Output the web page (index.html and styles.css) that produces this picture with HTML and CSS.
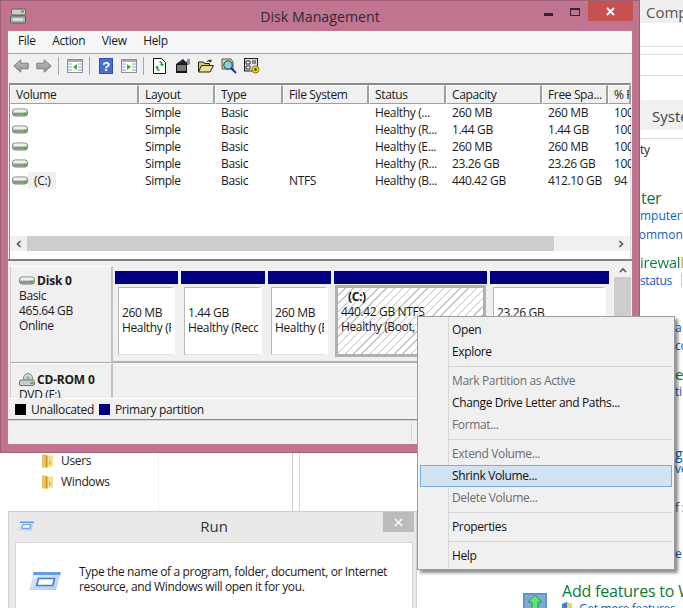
FILE: index.html
```html
<!DOCTYPE html>
<html lang="en">
<head>
<meta charset="utf-8">
<title>Disk Management</title>
<link rel="stylesheet" href="styles.css">
</head>
<body>
<svg class="defs" width="0" height="0" aria-hidden="true">
  <defs>
    <linearGradient id="arrowfill" x1="0" y1="0" x2="0" y2="1">
      <stop offset="0" stop-color="#c0c4c1"/>
      <stop offset="1" stop-color="#8c908d"/>
    </linearGradient>
    <linearGradient id="runbody" x1="0" y1="0" x2="1" y2="1">
      <stop offset="0" stop-color="#eaf3fd"/>
      <stop offset="1" stop-color="#a9c8ee"/>
    </linearGradient>
    <symbol id="disk" viewBox="0 0 16 9">
      <rect x="0.5" y="1" width="15" height="7" rx="2.5" fill="#c8ccc8" stroke="#77807a"/>
      <rect x="1.5" y="1.6" width="13" height="2.4" rx="1.2" fill="#eef0ee"/>
      <rect x="1" y="5" width="14" height="2.4" rx="1" fill="#8d948f"/>
      <rect x="11.5" y="4.6" width="3" height="2.6" fill="#4cb81e"/>
    </symbol>
    <symbol id="folder" viewBox="0 0 14 16">
      <path d="M1 1h4l1 1v13H1z" fill="#e8c65a"/>
      <path d="M6 2h6l1 1v11l-7 1z" fill="#f7e08c"/>
      <path d="M5 2h2v13H5z" fill="#c59c2e"/>
      <path d="M9 8h1v4H9z" fill="#6db3e0"/>
    </symbol>
    <symbol id="runicon" viewBox="0 0 32 20">
      <path d="M5 1h27l-5 18H0z" fill="url(#runbody)"/>
      <path d="M4.500 1H32l-.8 3H3.700z" fill="#5f9de6"/>
      <path d="M9.500 7.500h16l-1.800 7h-16z" fill="#fff" stroke="#3b7fd6" stroke-width="1.600"/>
    </symbol>
  </defs>
</svg>

<div class="backdrop">
  <div class="tab-comp">Comp</div>
  <div class="rule rule-a"></div>
  <div class="rule rule-b"></div>
  <div class="rule rule-c"></div>
  <div class="tab-sys">Syste</div>
  <div class="rule rule-d"></div>
  <span class="frag frag-ty">ty</span>
  <span class="frag head frag-ter">ter</span>
  <span class="frag link frag-mputer">mputer'</span>
  <span class="frag link frag-common">common</span>
  <span class="frag head frag-firewall">irewall</span>
  <span class="frag link frag-status">status</span>
  <div class="status-sep"></div>
  <span class="frag link frag-a">a</span>
  <span class="frag link frag-co">co</span>
  <span class="frag head frag-e">e</span>
  <span class="frag link frag-ti">ti</span>
  <span class="frag link frag-g">g</span>
  <span class="frag link frag-ve">ve</span>
  <span class="frag link frag-f">f :</span>
  <span class="frag link frag-e2">e</span>

  <div class="explorer-tree">
    <div class="tree-item"><svg class="tree-icon"><use href="#folder"/></svg>Users</div>
    <div class="tree-item"><svg class="tree-icon"><use href="#folder"/></svg>Windows</div>
  </div>
  <div class="pane-line"></div>
  <div class="pane-strip"></div>

  <div class="add-features">
    <svg class="add-icon" viewBox="0 0 24 16">
      <rect width="24" height="16" fill="#5c8cc4"/>
      <rect x="1.500" y="1.500" width="21" height="14" fill="#7fa8d6"/>
      <path d="M12 2l7 7h-4v7H9V9H5z" fill="#5ee07a" stroke="#2f9e4c"/>
    </svg>
    <div class="add-text">
      <div class="add-title">Add features to W</div>
      <div class="add-link">
        <svg class="shield" viewBox="0 0 12 13">
          <path d="M6 0l5 2v5c0 3-3 5-5 6-2-1-5-3-5-6V2z" fill="#f4cf55"/>
          <path d="M6 0L1 2v5h5zM6 7v6c2-1 5-3 5-6H6z" fill="#3f7fd0"/>
        </svg>
        Get more features
      </div>
    </div>
  </div>
</div>

<section class="run-window">
  <header class="run-title">
    <svg class="run-title-icon"><use href="#runicon"/></svg>
    <span>Run</span>
    <div class="run-close"><svg viewBox="0 0 10 10"><path d="M1 1l8 8M9 1l-8 8" stroke="#fff" stroke-width="1.600"/></svg></div>
  </header>
  <div class="run-body">
    <svg class="run-big-icon"><use href="#runicon"/></svg>
    <p>Type the name of a program, folder, document, or Internet resource, and Windows will open it for you.</p>
  </div>
</section>

<section class="dm-window">
  <header class="titlebar">
    <svg class="app-icon" viewBox="0 0 16 16">
      <rect x="1.500" y="1" width="14" height="6" rx="1.500" fill="#c8d0cc" stroke="#56605c"/>
      <rect x="11" y="2.500" width="3" height="2" fill="#49b51c"/>
      <rect x="0.500" y="8" width="15" height="7" rx="1" fill="#aab2ae" stroke="#56605c"/>
      <rect x="3" y="10.500" width="10" height="2" fill="#eef0ee"/>
    </svg>
    <h1>Disk Management</h1>
    <div class="controls">
      <svg class="ctl-min" viewBox="0 0 9 3"><rect width="9" height="3" fill="#2a2a30"/></svg>
      <svg class="ctl-max" viewBox="0 0 10 8"><rect x="0.500" y="0.500" width="9" height="7" fill="none" stroke="#2a2a30"/><rect width="10" height="2" fill="#2a2a30"/></svg>
      <div class="ctl-close"><svg viewBox="0 0 9 9"><path d="M1 1l7 7M8 1L1 8" stroke="#fff" stroke-width="1.800"/></svg></div>
    </div>
  </header>

  <div class="client">
    <nav class="menubar"><span>File</span><span>Action</span><span>View</span><span>Help</span></nav>

    <div class="toolbar">
      <svg class="tb tb-back" viewBox="0 0 16 14"><path d="M.8 7l7-6.200v3.400h7.400v5.600H7.800v3.400z" fill="url(#arrowfill)" stroke="#7c807d"/></svg>
      <svg class="tb" viewBox="0 0 16 14"><path d="M15.200 7l-7-6.200v3.400H.8v5.600h7.400v3.400z" fill="url(#arrowfill)" stroke="#7c807d"/></svg>
      <i class="tb-sep"></i>
      <svg class="tb" viewBox="0 0 16 14"><rect x="0.500" y="0.500" width="15" height="13" fill="#fff" stroke="#8a9099"/><rect x="1" y="1" width="14" height="2" fill="#a8aeb5"/><path d="M1 5h4M1 8h4M1 11h4M11 5h4M11 8h4M11 11h4" stroke="#8aa0c8"/><path d="M10 5v6L6 8z" fill="#38b030"/></svg>
      <i class="tb-sep tb-sep-wide"></i>
      <svg class="tb tb-help" viewBox="0 0 14 16"><rect width="14" height="16" fill="#2e4fb5"/><rect x="1" y="1" width="12" height="14" fill="#4a6fd0"/><text x="7" y="13" text-anchor="middle" class="tb-q">?</text></svg>
      <svg class="tb" viewBox="0 0 16 14"><rect x="0.500" y="0.500" width="15" height="13" fill="#fff" stroke="#8a9099"/><rect x="1" y="1" width="14" height="2" fill="#a8aeb5"/><path d="M1 5h4M1 8h4M1 11h4M11 5h4M11 8h4M11 11h4" stroke="#8aa0c8"/><path d="M6 5v6l4-3z" fill="#38b030"/></svg>
      <i class="tb-sep tb-sep-wide"></i>
      <svg class="tb tb-page" viewBox="0 0 13 16"><path d="M0.500 0.500h8l4 4v11h-12z" fill="#fff" stroke="#111"/><path d="M6.500 3c2 0 3 1 3 3H11L9 8.500 7 6h1c0-1-.7-1.500-1.500-1.500zM6.500 13c-2 0-3-1-3-3H2l2-2.500L6 10H5c0 1 .7 1.500 1.500 1.500z" fill="#1c9c28"/></svg>
      <svg class="tb tb-props" viewBox="0 0 16 16"><path d="M1 6h11v9H1z" fill="#111"/><path d="M2 8h9M2 10h9M2 12h9" stroke="#ddd"/><path d="M1 6l7-5 3 3 4-3v5l-4 1z" fill="#222"/><path d="M12 1h3v5h-3z" fill="#7f94c0"/></svg>
      <svg class="tb tb-open" viewBox="0 0 16 14"><path d="M0.500 3h5l1 1.500h5v8h-11z" fill="#d9c76c" stroke="#222"/><path d="M0.500 13l3-6.500h12l-3.500 6.500z" fill="#e8de8e" stroke="#222"/><path d="M9 3c1-2 3-2 4-1m0-1.500V2.500h-2" fill="none" stroke="#222"/></svg>
      <svg class="tb tb-find" viewBox="0 0 16 16"><path d="M1 1h9l2 3v7H1z" fill="#e8d88a" stroke="#555"/><circle cx="7" cy="7" r="4.200" fill="#7fd4e8" stroke="#334"/><path d="M10 10l5 5" stroke="#1a2ea8" stroke-width="2"/></svg>
      <svg class="tb tb-gear" viewBox="0 0 16 16"><rect x="0.500" y="0.500" width="13" height="12.500" fill="#ddd" stroke="#222"/><path d="M2 3h4v3H2zM8 3h4M8 5h4M2 8h4v3H2z" stroke="#333" fill="#fff"/><circle cx="11.500" cy="11.500" r="3.500" fill="#f2d21b" stroke="#8a7a10"/><circle cx="11.500" cy="11.500" r="1.200" fill="#222"/></svg>
    </div>

    <div class="listview">
      <div class="list-row list-head">
        <div>Volume</div><div>Layout</div><div>Type</div><div>File System</div><div>Status</div><div>Capacity</div><div>Free Spa...</div><div>% F</div>
      </div>
      <div class="list-rows">
        <div class="list-row"><div class="vol"><svg class="vol-icon"><use href="#disk"/></svg></div><div>Simple</div><div>Basic</div><div></div><div>Healthy (...</div><div>260 MB</div><div>260 MB</div><div>100</div></div>
        <div class="list-row"><div class="vol"><svg class="vol-icon"><use href="#disk"/></svg></div><div>Simple</div><div>Basic</div><div></div><div>Healthy (R...</div><div>1.44 GB</div><div>1.44 GB</div><div>100</div></div>
        <div class="list-row"><div class="vol"><svg class="vol-icon"><use href="#disk"/></svg></div><div>Simple</div><div>Basic</div><div></div><div>Healthy (E...</div><div>260 MB</div><div>260 MB</div><div>100</div></div>
        <div class="list-row"><div class="vol"><svg class="vol-icon"><use href="#disk"/></svg></div><div>Simple</div><div>Basic</div><div></div><div>Healthy (R...</div><div>23.26 GB</div><div>23.26 GB</div><div>100</div></div>
        <div class="list-row"><div class="vol"><svg class="vol-icon"><use href="#disk"/></svg><span class="vol-name">(C:)</span></div><div>Simple</div><div>Basic</div><div>NTFS</div><div>Healthy (B...</div><div>440.42 GB</div><div>412.10 GB</div><div>94</div></div>
      </div>
      <div class="hscroll">
        <svg class="arrow" viewBox="0 0 6 8"><path d="M5 1L2 4l3 3" fill="none" stroke="#555" stroke-width="1.600"/></svg>
        <div class="hscroll-track"><div class="hscroll-thumb"></div></div>
        <svg class="arrow" viewBox="0 0 6 8"><path d="M1 1l3 3-3 3" fill="none" stroke="#555" stroke-width="1.600"/></svg>
      </div>
    </div>

    <div class="diskpane">
      <div class="disks">
        <div class="disk-row">
          <div class="disk-label">
            <div class="disk-name"><svg class="disk-icon"><use href="#disk"/></svg>Disk 0</div>
            <div>Basic</div><div>465.64 GB</div><div>Online</div>
          </div>
          <div class="parts">
            <div class="part p1"><div class="part-body"><div class="part-name">&nbsp;</div><div>260 MB</div><div>Healthy (Recovery)</div></div></div>
            <div class="part p2"><div class="part-body"><div class="part-name">&nbsp;</div><div>1.44 GB</div><div>Healthy (Recovery)</div></div></div>
            <div class="part p3"><div class="part-body"><div class="part-name">&nbsp;</div><div>260 MB</div><div>Healthy (EFI)</div></div></div>
            <div class="part p4 selected"><div class="part-body"><div class="part-name"><b>(C:)</b></div><div>440.42 GB NTFS</div><div>Healthy (Boot, Page File)</div></div></div>
            <div class="part p5"><div class="part-body"><div class="part-name">&nbsp;</div><div>23.26 GB</div><div>Healthy (Recovery)</div></div></div>
          </div>
        </div>
        <div class="disk-row cd-row">
          <div class="disk-label">
            <div class="disk-name"><svg class="disk-icon cd-icon" viewBox="0 0 16 13"><circle cx="9" cy="5" r="4.500" fill="#cfd8d4" stroke="#7d8a84"/><circle cx="9" cy="5" r="1.200" fill="#fff" stroke="#7d8a84"/><rect x="0.500" y="7" width="15" height="5.500" rx="1.500" fill="#c8ccc8" stroke="#6e7772"/><rect x="11.500" y="9" width="3" height="2" fill="#4cb81e"/></svg>CD-ROM 0</div>
            <div>DVD (F:)</div>
          </div>
          <div class="cd-body"></div>
        </div>
      </div>
      <div class="vscroll">
        <svg class="arrow-up" viewBox="0 0 8 6"><path d="M1 5l3-3 3 3" fill="none" stroke="#555" stroke-width="1.600"/></svg>
        <div class="vscroll-thumb"></div>
      </div>
    </div>

    <div class="legend">
      <i class="swatch swatch-black"></i><span>Unallocated</span>
      <i class="swatch swatch-navy"></i><span>Primary partition</span>
    </div>
    <div class="statusbar"><i class="status-divider"></i></div>
  </div>
</section>

<ul class="ctx-menu">
  <li>Open</li>
  <li>Explore</li>
  <li class="sep"></li>
  <li class="off">Mark Partition as Active</li>
  <li>Change Drive Letter and Paths...</li>
  <li class="off">Format...</li>
  <li class="sep"></li>
  <li class="off">Extend Volume...</li>
  <li class="hot">Shrink Volume...</li>
  <li class="off">Delete Volume...</li>
  <li class="sep"></li>
  <li>Properties</li>
  <li class="sep"></li>
  <li>Help</li>
</ul>
</body>
</html>
```

FILE: styles.css
```css
* { box-sizing: border-box; }
html, body { margin: 0; height: 100%; }
body {
  position: relative;
  width: 683px;
  height: 608px;
  overflow: hidden;
  background: #fff;
  color: #1a1a1a;
  font: 12px/15px "Open Sans", "Noto Sans", sans-serif;
  letter-spacing: -0.36px;
}
.defs { position: absolute; }

/* Windows behind */
.backdrop { position: absolute; inset: 0; }
.tab-comp { position: absolute; left: 640px; top: 0; width: 43px; height: 23px; padding: 3px 0 0 6px; background: #efefef; font-size: 15px; line-height: 18px; color: #555; letter-spacing: 0; white-space: nowrap; overflow: hidden; }
.tab-sys { position: absolute; left: 640px; top: 100px; width: 43px; height: 30px; padding: 7px 0 0 12px; background: #f0f0f0; font-size: 15px; line-height: 18px; color: #444; letter-spacing: 0; white-space: nowrap; overflow: hidden; }
.rule { position: absolute; left: 640px; width: 43px; height: 1px; background: #dedede; }
.rule-a { top: 46px; }
.rule-b { top: 54px; }
.rule-c { top: 75px; }
.rule-d { top: 138px; }
.frag { position: absolute; white-space: nowrap; }
.link { color: #0f5fbd; }
.head { color: #0a7a3a; font-size: 16px; line-height: 20px; letter-spacing: -0.3px; }
.frag-ty { left: 640px; top: 142px; }
.frag-ter { left: 641px; top: 188px; }
.frag-mputer { left: 640px; top: 208px; letter-spacing: 0; }
.frag-common { left: 633px; top: 227px; letter-spacing: 0; }
.frag-firewall { left: 640px; top: 252px; font-size: 15px; background: linear-gradient(90deg, #0a7a3a 0 40px, #d0a000 40px); -webkit-background-clip: text; background-clip: text; color: transparent; }
.frag-status { left: 640px; top: 273px; }
.status-sep { position: absolute; left: 681px; top: 273px; width: 1px; height: 14px; background: #ccc; }
.frag-a { left: 675px; top: 320px; }
.frag-co { left: 675px; top: 338px; }
.frag-e { left: 675px; top: 364px; font-size: 15px; }
.frag-ti { left: 675px; top: 384px; }
.frag-g { left: 675px; top: 446px; font-size: 14px; }
.frag-ve { left: 675px; top: 461px; }
.frag-f { left: 675px; top: 500px; }
.frag-e2 { left: 675px; top: 546px; }

.explorer-tree { position: absolute; left: 41px; top: 450px; }
.tree-item { display: flex; align-items: center; gap: 7px; height: 21px; color: #222; }
.tree-icon { width: 13px; height: 16px; }
.pane-line { position: absolute; left: 158px; top: 452px; width: 1px; height: 60px; background: #f2f2f2; }
.pane-strip { position: absolute; left: 292px; top: 452px; width: 8px; height: 60px; background: #fff; border-left: 1px solid #c8c8c8; border-right: 1px solid #d8d8d8; }

.add-features { position: absolute; left: 523px; top: 581px; display: flex; gap: 0; }
.add-icon { width: 24px; height: 16px; margin-top: 12px; }
.add-text { margin-left: 15px; }
.add-title { font-size: 16px; line-height: 20px; color: #0a7a3a; white-space: nowrap; letter-spacing: -0.2px; }
.add-link { display: flex; align-items: center; gap: 6px; margin-left: -1px; color: #0f5fbd; white-space: nowrap; }
.shield { width: 12px; height: 13px; }

/* Run dialog */
.run-window { position: absolute; left: 8px; top: 511px; width: 409px; height: 110px; padding: 0 3px 0 6px; background: #e9e9e9; border: 1px solid #cfcfcf; }
.run-title { position: relative; display: flex; align-items: center; justify-content: center; height: 30px; padding-bottom: 2px; font-size: 15px; color: #333; letter-spacing: 0; }
.run-title-icon { position: absolute; left: 3px; top: 9px; width: 16px; height: 10px; }
.run-close { position: absolute; right: -1px; top: 0; width: 31px; height: 20px; background: #bcbcbc; display: flex; align-items: center; justify-content: center; }
.run-close svg { width: 9px; height: 9px; }
.run-body { display: flex; height: 80px; padding: 21px 0 0 13px; background: #fff; border: 1px solid #d6d6d6; }
.run-big-icon { flex: none; width: 32px; height: 20px; margin-top: 7px; }
.run-body p { margin: 0 0 0 18px; width: 320px; line-height: 15px; }

/* Disk Management */
.dm-window { position: absolute; left: 0; top: 0; width: 640px; height: 453px; padding: 0 7px 8px; background: #c07490; border: 1px solid #a06078; display: flex; flex-direction: column; }
.titlebar { position: relative; flex: none; height: 30px; display: flex; align-items: center; justify-content: center; }
.titlebar h1 { margin: 0; font-size: 14.200px; font-weight: 400; color: #2d2d3a; letter-spacing: 0; }
.app-icon { position: absolute; left: 2px; top: 7px; width: 16px; height: 16px; }
.controls { position: absolute; right: -1px; top: 0; display: flex; align-items: flex-start; }
.ctl-min { width: 9px; height: 3px; margin-top: 12px; margin-right: 17px; }
.ctl-max { width: 10px; height: 8px; margin-top: 7px; margin-right: 8px; }
.ctl-close { width: 45px; height: 20px; background: #c75050; display: flex; align-items: center; justify-content: center; }
.ctl-close svg { width: 9px; height: 9px; }

.client { flex: 1; min-height: 0; display: flex; flex-direction: column; background: #f0f0f0; }
.menubar { flex: none; height: 23px; display: flex; background: #f5f6f8; border-bottom: 1px solid #a6a6a6; padding: 2px 0 0 10px; gap: 16.600px; }
.toolbar { flex: none; height: 23px; padding-left: 5px; display: flex; align-items: center; background: #f0f0f0; }
.tb { flex: none; width: 16px; height: 14px; margin-right: 6px; }
.tb-back { margin-right: 7px; }
.tb-sep { flex: none; width: 1px; height: 18px; background: #a8a8a8; margin-right: 8px; }
.tb-sep-wide { margin-right: 9px; }
.tb-help { width: 14px; height: 16px; margin-right: 8px; }
.tb-q { font: 700 13px "Liberation Sans", sans-serif; fill: #fff; }
.tb-page { width: 13px; height: 16px; margin-right: 9px; }
.tb-props { height: 16px; margin-right: 7px; }
.tb-open { margin-right: 7px; }
.tb-find { height: 16px; margin-right: 7px; }
.tb-gear { height: 16px; }

.listview { flex: none; height: 176px; margin: 6px 1px 0; display: flex; flex-direction: column; background: #fff; border-top: 2px solid #8a8a8a; border-left: 1px solid #8a8a8a; border-right: 1px solid #dcdcdc; }
.list-row { display: grid; grid-template-columns: 129px 76px 68px 86px 77px 96px 66px 23px; }
.list-row > div { padding-left: 6px; white-space: nowrap; overflow: hidden; }
.list-head { flex: none; height: 19px; background: #f0f0f0; }
.list-head > div { padding: 1px 0 0 5px; border: 1px solid #fff; border-right: 2px solid #a0a0a0; border-bottom: 1px solid #a0a0a0; }
.list-rows { flex: none; height: 130px; padding-top: 0; }
.list-rows .list-row { height: 17px; line-height: 17px; }
.list-rows .vol { display: flex; align-items: center; padding-left: 2px; overflow: visible; }
.vol-icon { width: 16px; height: 9px; flex: none; }
.vol-name { margin-left: 0; padding: 0 6px; background: #f0f0f0; }
.hscroll { flex: none; height: 15px; margin-top: 2px; display: flex; align-items: center; background: #f0f0f0; }
.arrow { flex: none; width: 17px; height: 8px; }
.hscroll-track { flex: 1; height: 15px; }
.hscroll-thumb { width: 527px; height: 15px; background: #cdcdcd; }

.diskpane { flex: none; height: 140px; display: flex; padding: 5px 1px 0 2px; border-top: 2px solid #808080; background: #f0f0f0; }
.disks { width: 604px; flex: none; }
.disk-row { display: flex; height: 97px; }
.disk-label { flex: none; width: 103px; padding: 6px 0 0 8px; border-right: 2px solid #c4c4c4; border-bottom: 1px solid #a8a8a8; background: #f0f0f0; border-top: 1px solid #fff; border-left: 1px solid #d0d0d0; }
.disk-name { display: flex; align-items: center; font-weight: 700; letter-spacing: -0.2px; }
.disk-icon { width: 16px; height: 9px; flex: none; margin-right: 2px; }
.cd-icon { height: 13px; }
.parts { flex: 1; display: flex; gap: 3px; padding-left: 2px; height: 92px; margin-top: 5px; border-bottom: 2px solid #b0b0b0; }
.part { flex: none; border-top: 13px solid #000080; padding: 3px; }
.p1 { width: 63px; }
.p2 { width: 84px; }
.p3 { width: 63px; }
.p4 { width: 153px; }
.p5 { width: 119px; }
.part-body { height: 68px; padding: 2px 0 0 3px; background: #fff; border: 1px solid #b8b8b8; border-right: 4px solid #fff; border-bottom-color: #e0e0e0; overflow: hidden; white-space: nowrap; }
.part-name { height: 15px; padding-left: 8px; }
.selected .part-body { background: repeating-linear-gradient(135deg, #fff 0 4.800px, #c2c2c2 4.800px 5.800px); border: 3px solid #b0b0b0; padding: 1px 0 0 3px; margin: -2px -2px -2px; height: 72px; }
.p4 .part-name { padding-left: 7px; }
.cd-row { height: 36px; overflow: hidden; }
.cd-row .disk-label { padding-top: 8px; height: 36px; border-bottom: 0; }
.cd-body { flex: 1; margin-top: 2px; border-top: 1px solid #fff; }
.vscroll { flex: none; width: 17px; display: flex; flex-direction: column; align-items: center; }
.arrow-up { width: 8px; height: 6px; margin: 1px 0 4px; flex: none; }
.vscroll-thumb { width: 17px; flex: 1; background: #cdcdcd; }

.legend { flex: none; height: 22px; display: flex; align-items: center; padding-left: 7px; margin-top: -1px; background: #f0f0f0; border-top: 1px solid #fff; border-bottom: 1px solid #8a8a8a; position: relative; }
.swatch { width: 11px; height: 11px; margin-right: 5px; }
.swatch-black { background: #000; }
.swatch-navy { background: #000080; margin-left: 5px; }
.statusbar { flex: 1; position: relative; padding: 2px 0 0 403px; border-top: 1px solid #d8d8d8; }
.status-divider { display: block; width: 1px; height: 18px; background: #d0d0d0; }

/* Context menu */
.ctx-menu { position: absolute; left: 417px; top: 316px; width: 258px; height: 254px; margin: 0; padding: 2px; list-style: none; background: #f0f0f0 linear-gradient(90deg, transparent 30px, #d8d8d8 30px, #d8d8d8 31px, transparent 31px); border: 1px solid #9c9c9c; box-shadow: 3px 3px 3px rgba(0,0,0,.45); }
.ctx-menu li { height: 22px; line-height: 20px; padding-left: 31px; color: #111; border: 1px solid transparent; }
.ctx-menu .sep { height: 1px; margin: 3px 0 3px 29px; padding: 0; border: 0; background: #d4d4d4; }
.ctx-menu .off { color: #6d6d6d; }
.ctx-menu .hot { background: #d1e2f2; border-color: #78aee6; }
```
